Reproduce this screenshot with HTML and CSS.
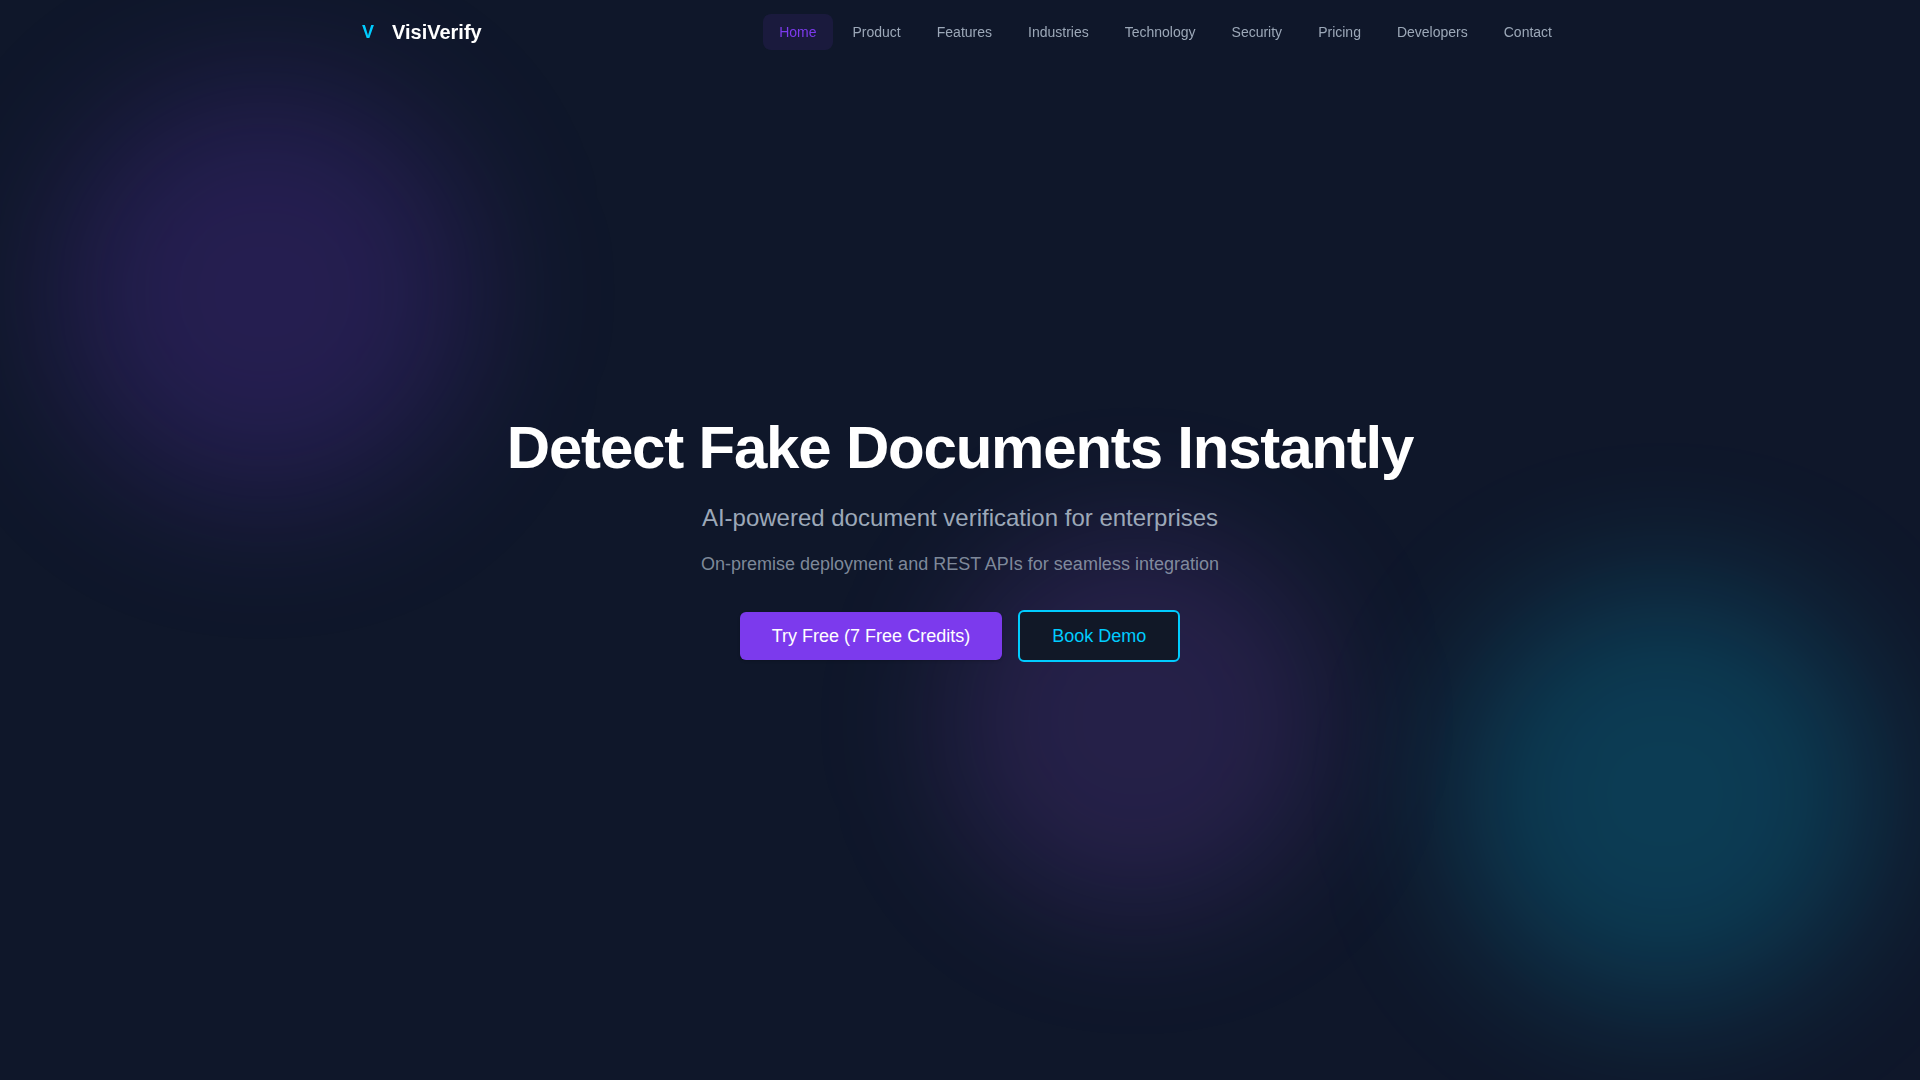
FILE: index.html
```html
<!DOCTYPE html>
<html lang="en">
<head>
    <meta charset="UTF-8">
    <meta name="viewport" content="width=device-width, initial-scale=1.0">
    <title>VisiVerify</title>
    <link rel="stylesheet" href="styles.css">
</head>
<body>
    <header class="header">
        <div class="header-inner">
            <a class="logo" href="#">
                <span class="logo-mark">V</span>
                <span class="logo-text">VisiVerify</span>
            </a>
            <nav class="nav">
                <a class="nav-link active" href="#">Home</a>
                <a class="nav-link" href="#">Product</a>
                <a class="nav-link" href="#">Features</a>
                <a class="nav-link" href="#">Industries</a>
                <a class="nav-link" href="#">Technology</a>
                <a class="nav-link" href="#">Security</a>
                <a class="nav-link" href="#">Pricing</a>
                <a class="nav-link" href="#">Developers</a>
                <a class="nav-link" href="#">Contact</a>
            </nav>
        </div>
    </header>

    <main class="hero">
        <!-- background glow -->
        <div class="glow glow-purple"></div>
        <div class="glow glow-cyan"></div>
        <div class="glow glow-violet"></div>

        <div class="hero-content">
            <h1>Detect Fake Documents Instantly</h1>
            <p class="subtitle">AI-powered document verification for enterprises</p>
            <p class="note">On-premise deployment and REST APIs for seamless integration</p>
            <div class="buttons">
                <button class="btn btn-primary">Try Free (7 Free Credits)</button>
                <button class="btn btn-outline">Book Demo</button>
            </div>
        </div>
    </main>
</body>
</html>
```
FILE: styles.css
```css
* {
    box-sizing: border-box;
}
body {
    margin: 0;
    font-family: "Liberation Sans", Arial, sans-serif;
    background-color: #0f172a;
    color: #fff;
}
a {
    color: inherit;
    text-decoration: none;
}
.header {
    position: fixed;
    top: 0;
    left: 0;
    right: 0;
    z-index: 10;
}
.header-inner {
    display: flex;
    align-items: center;
    justify-content: space-between;
    max-width: 1280px;
    height: 64px;
    margin: 0 auto;
    padding: 0 32px;
}
.logo {
    display: flex;
    align-items: center;
    gap: 8px;
    font-weight: bold;
}
.logo-mark {
    width: 32px;
    font-size: 18px;
    line-height: 28px;
    text-align: center;
    color: #00ccff;
}
.logo-text {
    font-size: 20px;
    line-height: 28px;
}
.nav {
    display: flex;
    gap: 4px;
}
.nav-link {
    padding: 8px 16px;
    border-radius: 8px;
    font-size: 14px;
    line-height: 20px;
    color: #9ca8b8;
}
.nav-link:hover {
    color: #fff;
}
.nav-link.active {
    background: rgba(124, 58, 237, 0.1);
    color: #7c3aed;
}
.hero {
    position: relative;
    display: flex;
    align-items: center;
    justify-content: center;
    min-height: 100vh;
    padding: 64px 32px;
    overflow: hidden;
}
.hero-content {
    position: relative;
    text-align: center;
}
h1 {
    margin: 0 0 24px;
    font-size: 60px;
    line-height: 60px;
    letter-spacing: -0.02em;
}
.subtitle {
    margin: 0 0 16px;
    font-size: 24px;
    line-height: 32px;
    color: #9ca8b8;
}
.note {
    margin: 0 0 32px;
    font-size: 18px;
    line-height: 28px;
    color: rgba(156, 168, 184, 0.8);
}
.buttons {
    display: flex;
    align-items: center;
    justify-content: center;
    gap: 16px;
}
.btn {
    padding: 10px 32px;
    border: none;
    border-radius: 6px;
    font-family: inherit;
    font-size: 18px;
    line-height: 28px;
    cursor: pointer;
}
.btn-primary {
    background: #7c3aed;
    color: #fff;
    box-shadow: 0 1px 3px rgba(0, 0, 0, 0.2);
}
.btn-outline {
    background: #111827;
    border: 2px solid #00ccff;
    color: #00ccff;
}
.glow {
    position: absolute;
    width: 384px;
    height: 384px;
    border-radius: 50%;
    filter: blur(64px);
    transform: translate(-50%, -50%);
}
.glow-purple {
    top: 27%;
    left: 13.8%;
    width: 416px;
    height: 416px;
    background: rgba(124, 58, 237, 0.2);
    filter: blur(70px);
}
.glow-cyan {
    top: 73.5%;
    left: 86.7%;
    width: 424px;
    height: 424px;
    background: rgba(0, 209, 255, 0.2);
    filter: blur(70px);
}
.glow-violet {
    top: 66.8%;
    left: 59.2%;
    background: rgba(168, 85, 247, 0.15);
}
```
